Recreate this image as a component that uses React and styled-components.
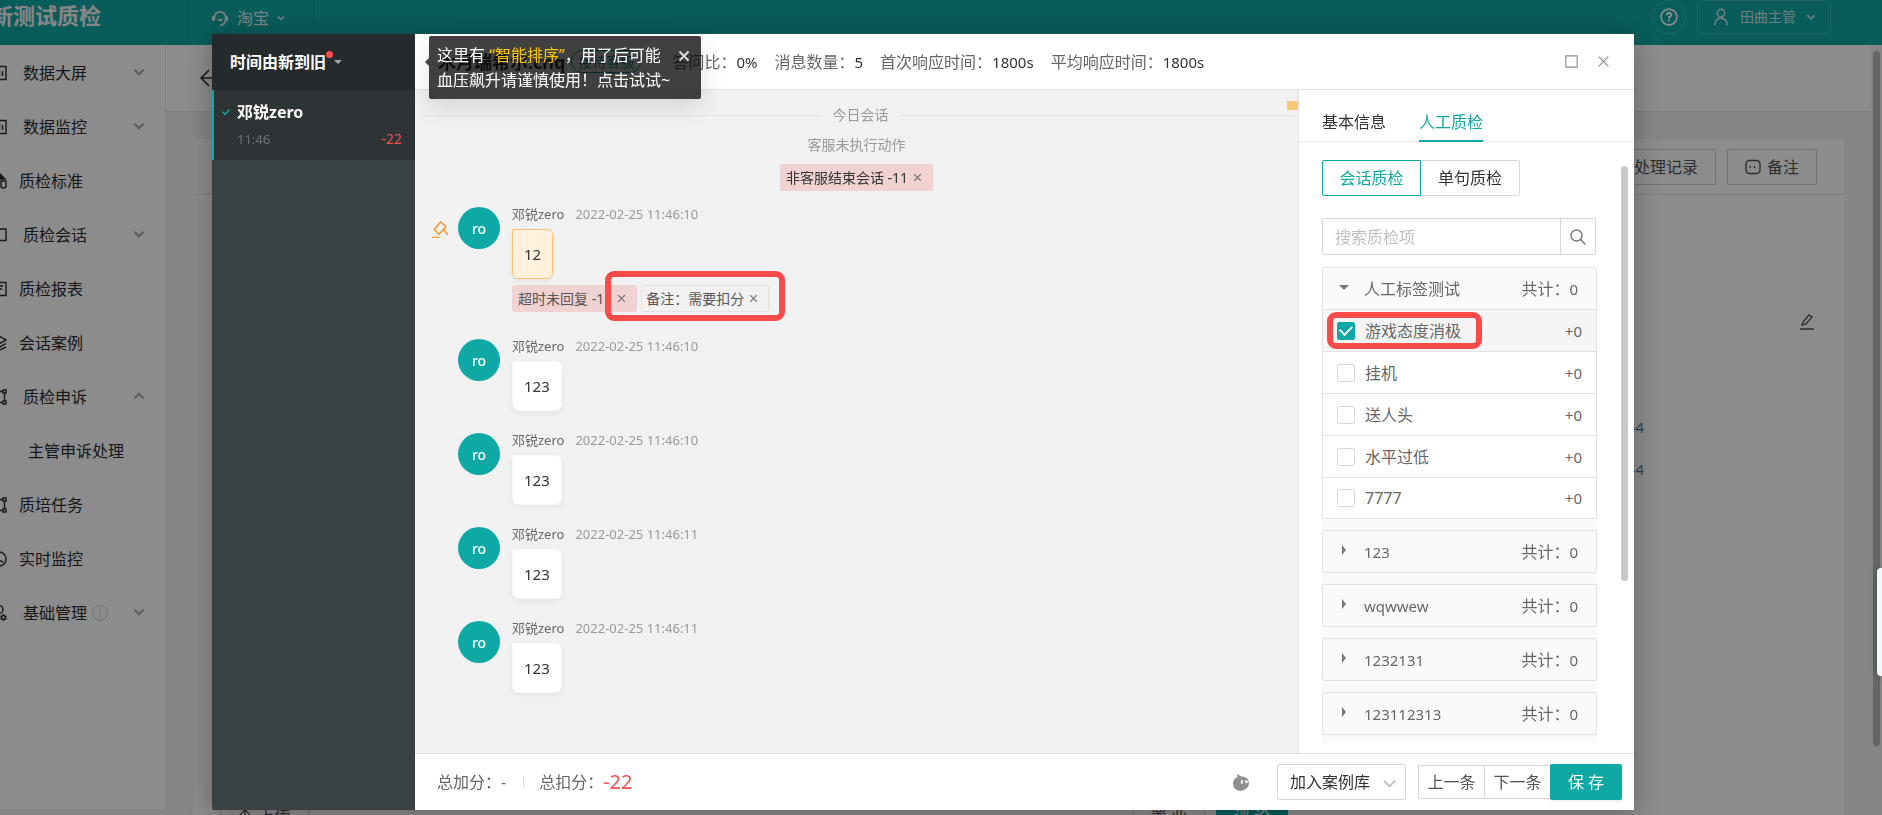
import React, { useState } from 'react'
import styled, { createGlobalStyle } from 'styled-components'

const TEAL = '#0fa9a5'

const GlobalStyle = createGlobalStyle`
    * {
        box-sizing: border-box;
    }
    body {
        margin: 0;
        overflow: hidden;
        font-family: "Noto Sans", "Noto Sans CJK SC", sans-serif;
        font-size: 16px;
        line-height: 24px;
        color: #333;
    }
    button, input, select {
        font: inherit;
        color: inherit;
        margin: 0;
        padding: 0;
    }
    button {
        border: none;
        background: none;
        cursor: pointer;
        white-space: nowrap;
    }
    ul {
        list-style: none;
        margin: 0;
        padding: 0;
    }
    h1, h2, h3, p {
        margin: 0;
    }
    svg {
        display: block;
        flex: none;
    }
`

/* ---------- icons ---------- */

const Icon = ({ size = 16, width = 1.4, children }) => (
  <svg width={size} height={size} viewBox='0 0 16 16' fill='none' stroke='currentColor' strokeWidth={width} aria-hidden='true'>
    {children}
  </svg>
)

const ChevronDown = ({ size = 12, width = 3 }) => (
  <Icon size={size} width={width}><path d='M2 5l6 6 6-6' /></Icon>
)
const ChevronUp = ({ size = 12, width = 3 }) => (
  <Icon size={size} width={width}><path d='M2 11l6-6 6 6' /></Icon>
)
const Cross = ({ size = 12, width = 1.8 }) => (
  <Icon size={size} width={width}><path d='M2 2l12 12M14 2L2 14' /></Icon>
)

const menuIcons = {
  chart: <path d='M1 1.5h14v13H1zM5 11V6M8.500 11V4.500M11.500 11V6' />,
  standard: <><path d='M2 1h7l5 5H2z' fill='currentColor' /><path d='M10 8h5v5q0 2-2.500 2T10 13z' /></>,
  dialog: <path d='M1 2h14v11.500H1z' />,
  report: <path d='M1 1.500h14v13H1zM5 5h7M5 8h6' />,
  layers: <path d='M8 1l7 4-7 4-7-4zM1 8.500l7 4 7-4M1 12l7 3.500 7-3.500' />,
  flow: <path d='M12 1h3v3h-3zM12 12h3v3h-3zM13.500 4v8M12 2.500H6M12 13.500H6M1 1h3v3H1z' />,
  clock: <><circle cx='8' cy='8' r='7' /><path d='M7 4v5l5 2' /></>,
  manage: <><circle cx='8' cy='4.500' r='4' /><path d='M1 15q0-5 6-5.500' /><circle cx='12.500' cy='12.500' r='2' /><path d='M12.500 9v1.500M12.500 14.500V16M9.500 11l1.300.8M14.200 13.300l1.300.8M15.500 11l-1.300.7M9.500 14.200l1.300-.9' /></>,
}

/* ---------- page behind the dialog ---------- */

const Shell = styled.div`
    height: 100vh;
    margin-left: -32px;
    overflow: hidden;
    display: flex;
    flex-direction: column;
    background-color: #f1f5f4;
`

const TopBar = styled.header`
    height: 45px;
    flex: none;
    display: flex;
    align-items: flex-start;
    padding-right: 51px;
    background-color: ${TEAL};
    color: #fff;
`

const Logo = styled.h1`
    width: 219px;
    padding-left: 23px;
    font-size: 22px;
    line-height: 30px;
    font-weight: 700;
    color: #f4f4f4;
    white-space: nowrap;
`

const Channel = styled.button`
    height: 45px;
    width: 127px;
    padding: 0 0 10px 23px;
    display: flex;
    align-items: center;
    gap: 8px;
    border-left: 1px solid #0d9996;
    border-right: 1px solid #0d9996;
    color: #e2eeee;
`

const TopRight = styled.div`
    margin-left: auto;
    display: flex;
    gap: 11px;
`

const HelpButton = styled.button`
    width: 34px;
    height: 34px;
    display: grid;
    place-items: center;
    border: 1px solid #37b5b2;
    border-radius: 50%;
`

const UserButton = styled.button`
    width: 134px;
    height: 34px;
    padding-left: 14px;
    display: flex;
    align-items: center;
    gap: 10px;
    border: 1px solid #37b5b2;
    border-radius: 6px;
    font-size: 14px;
    color: #c9e6e5;
`

const Body = styled.div`
    flex: 1;
    min-height: 0;
    display: flex;
`

const SideNav = styled.nav`
    width: 197px;
    flex: none;
    padding-top: 1px;
    margin-bottom: 4px;
    background-color: #fff;
    border-bottom: 1px solid #e8e8e8;
`

const NavItem = styled.a`
    height: 54px;
    padding: 0 20px 0 ${props => (props.$child ? 60 : 23)}px;
    display: flex;
    align-items: center;
    color: #2b2b2b;
    text-decoration: none;
    white-space: nowrap;
`

const NavText = styled.span`
    margin-left: ${props => (props.$wide ? 16 : 12)}px;
`

const NavArrow = styled.span`
    margin-left: auto;
    padding-bottom: 3px;
    color: #aaa;
`

const InfoMark = styled.span`
    margin-left: 5px;
    color: #cfcfcf;
`

const Main = styled.main`
    flex: 1;
    min-width: 0;
    display: flex;
    flex-direction: column;
`

const PageHead = styled.div`
    height: 67px;
    flex: none;
    padding-left: 34px;
    display: flex;
    align-items: center;
    background-color: #fff;
    border-left: 1px solid #ececec;
    border-bottom: 1px solid #e4e4e4;
`

const Card = styled.section`
    flex: 1;
    min-height: 0;
    margin: 27px 27px 0 28px;
    overflow: hidden;
    background-color: #fff;
`

const CardHead = styled.div`
    height: 56px;
    padding: 0 27px;
    display: flex;
    align-items: center;
    justify-content: flex-end;
    gap: 11px;
    border-bottom: 1px solid #e8e8e8;
`

const GhostButton = styled.button`
    height: 36px;
    min-width: ${props => props.$width}px;
    padding: 0 17px;
    display: flex;
    align-items: center;
    justify-content: center;
    gap: 6px;
    border: 1px solid #d0d0d0;
    border-radius: 2px;
    color: #555;
`

const CardBody = styled.div`
    padding: 106px 29px 0 27px;
`

const EditLine = styled.div`
    height: 42px;
    display: flex;
    align-items: center;
    justify-content: flex-end;
    color: #555;
`

const OrderLinks = styled.div`
    padding: 63px 171px 308px 0;
    text-align: right;
    font-size: 15px;
    line-height: 42px;

    a {
        display: block;
        color: #4f79a8;
        text-decoration: none;
    }
`

const Actions = styled.div`
    display: flex;
    gap: 11px;
    padding-right: 527px;

    button:first-child {
        margin-right: auto;
    }
`

const TealButton = styled.button`
    height: 36px;
    width: 72px;
    background-color: ${TEAL};
    color: #fff;
`

const PageScroll = styled.div`
    width: 11px;
    flex: none;
    padding: 6px 2px 0;
    background-color: #f3f3f3;
`

const PageThumb = styled.div`
    height: 91%;
    border-radius: 4px;
    background-color: #b8b8b8;
`

/* ---------- dialog ---------- */

const Overlay = styled.div`
    position: fixed;
    inset: 0;
    padding: 34px 248px 5px 212px;
    background-color: rgba(0, 0, 0, 0.45);
`

const Dialog = styled.div`
    height: 100%;
    display: flex;
    box-shadow: 0 4px 30px rgba(0, 0, 0, 0.3);
    border-radius: 2px;
`

const Sessions = styled.aside`
    width: 203px;
    flex: none;
    background-color: #3a4142;
    border-radius: 2px 0 0 2px;
`

const SortButton = styled.button`
    width: 100%;
    height: 56px;
    padding: 0 0 0 18px;
    display: flex;
    align-items: center;
    background-color: #252a2c;
    color: #fff;
    font-weight: 700;
`

const RedDot = styled.i`
    width: 7px;
    height: 7px;
    margin: 0 1px 16px 0;
    border-radius: 50%;
    background-color: #f5524f;
`

const Caret = styled.i`
    border: 4px solid transparent;
    border-top-color: #a5a8a9;
    border-bottom: none;
`

const Session = styled.div`
    height: 70px;
    padding: 10px 13px 0 8px;
    display: grid;
    grid-template-columns: 15px 1fr auto;
    align-content: start;
    align-items: center;
    border-left: 2px solid ${TEAL};
    background-color: #2e3436;
    color: ${TEAL};
`

const SessionName = styled.h3`
    grid-column: 2 / 4;
    font-size: 16px;
    line-height: 24px;
    color: #fff;
`

const SessionTime = styled.time`
    grid-column: 2;
    font-size: 13px;
    line-height: 30px;
    color: #6c7072;
`

const SessionScore = styled.span`
    font-size: 14px;
    line-height: 30px;
    color: #f05350;
`

const Content = styled.div`
    flex: 1;
    min-width: 0;
    display: flex;
    flex-direction: column;
    background-color: #fff;
`

const Head = styled.header`
    height: 56px;
    flex: none;
    padding: 0 24px 0 23px;
    display: flex;
    align-items: center;
    border-bottom: 1px solid #e2e2e2;
    white-space: nowrap;
`

const Title = styled.h2`
    font-size: 18px;
    line-height: 26px;
`

const Pill = styled.span`
    margin: 0 31px 0 6px;
    padding: 0 6px;
    border: 1px solid ${TEAL};
    border-radius: 12px;
    font-size: 14px;
    line-height: 21px;
    color: ${TEAL};
`

const Stat = styled.span`
    margin-right: 17px;
    color: #666;
`

const Value = styled.span`
    font-size: 15px;
    color: #333;
`

const WindowButtons = styled.div`
    margin-left: auto;
    display: flex;
    gap: 19px;
    color: #8c8c8c;
`

const Middle = styled.div`
    flex: 1;
    min-height: 0;
    display: flex;
`

const Chat = styled.div`
    position: relative;
    flex: 1;
    min-width: 0;
    overflow: hidden;
    background-color: #f1f1f1;
`

const ScrollMark = styled.i`
    position: absolute;
    top: 11px;
    right: 0;
    width: 11px;
    height: 9px;
    background-color: #fac67a;
`

const Today = styled.div`
    margin: 15px 3px 0 11px;
    display: flex;
    align-items: center;
    gap: 12px;
    font-size: 14px;
    line-height: 20px;
    color: #999;

    &::before, &::after {
        content: "";
        flex: 1;
        height: 1px;
        background-color: #e3e3e3;
    }
`

const Notice = styled.div`
    margin-bottom: 15px;
    display: flex;
    flex-direction: column;
    align-items: center;
    gap: 9px;
    font-size: 14px;
    line-height: 20px;
    color: #999;

    p {
        margin-top: 10px;
    }
`

const Tag = styled.span`
    height: 27px;
    padding: 0 10px 0 ${props => (props.$note ? 4 : 5)}px;
    display: inline-flex;
    align-items: center;
    gap: 5px;
    border: 1px solid ${props => (props.$note ? '#e3e3e3' : '#f0d2d3')};
    border-radius: 2px;
    background-color: ${props => (props.$note ? '#f1f1f1' : '#f0d2d3')};
    font-size: 14px;
    color: ${props => (props.$dark ? '#333' : '#555')};
    white-space: nowrap;

    button {
        color: #666;
    }
`

const Message = styled.article`
    padding: 1px 17px 0 16px;
    margin-bottom: 21px;
    display: grid;
    grid-template-columns: 27px 54px 1fr;
    align-items: start;
`

const Gavel = styled.span`
    padding-top: 14px;
    color: #fa9021;
`

const Avatar = styled.div`
    width: 42px;
    height: 42px;
    border-radius: 50%;
    background-color: ${TEAL};
    color: #fff;
    font-size: 14px;
    font-weight: 500;
    line-height: 44px;
    text-align: center;
`

const MessageHead = styled.div`
    display: flex;
    gap: 11px;
    height: 22px;
    font-size: 13px;
    line-height: 14px;
    color: #666;

    time {
        color: #999;
    }
`

const Bubble = styled.p`
    width: fit-content;
    padding: 12px 11px;
    border: 1px solid ${props => (props.$marked ? '#fdc271' : '#f6f6f6')};
    border-radius: 0 6px 6px 6px;
    background-color: ${props => (props.$marked ? '#fff1de' : '#fff')};
    box-shadow: 0 2px 5px rgba(0, 0, 0, 0.06);
    font-size: 15px;
    line-height: 24px;
`

const TagRow = styled.div`
    position: relative;
    width: fit-content;
    margin: 6px 0 5px;
    display: flex;
    gap: 4px;
`

const RedFrame = styled.i`
    position: absolute;
    top: ${props => props.$top}px;
    left: ${props => props.$left}px;
    width: ${props => props.$width}px;
    height: ${props => props.$height}px;
    border: 6px solid #f94b47;
    border-radius: 9px;
    pointer-events: none;
`

/* ---------- check panel ---------- */

const Panel = styled.aside`
    width: 336px;
    flex: none;
    display: flex;
    flex-direction: column;
    border-left: 1px solid #e2e2e2;
`

const Tabs = styled.div`
    height: 52px;
    flex: none;
    padding-left: 23px;
    display: flex;
    gap: 33px;
    border-bottom: 1px solid #ebebeb;
`

const Tab = styled.button`
    height: 52px;
    padding-top: 14px;
    border-bottom: 2px solid ${props => (props.$active ? TEAL : 'transparent')};
    color: ${props => (props.$active ? TEAL : '#333')};
`

const PanelBody = styled.div`
    flex: 1;
    min-height: 0;
    display: flex;
`

const PanelColumn = styled.div`
    flex: 1;
    min-width: 0;
    padding: 18px 0 10px 23px;
    display: flex;
    flex-direction: column;
`

const PanelThumb = styled.div`
    width: 7px;
    height: 68%;
    margin: 24px 6px 0 24px;
    border-radius: 4px;
    background-color: #c8c8c8;
`

const Segments = styled.div`
    flex: none;
    display: flex;
`

const Segment = styled.button`
    width: 99px;
    height: 36px;
    border: 1px solid ${props => (props.$active ? TEAL : '#d9d9d9')};
    border-radius: ${props => (props.$active ? '2px 0 0 2px' : '0 2px 2px 0')};
    color: ${props => (props.$active ? TEAL : '#333')};

    & + & {
        border-left: none;
    }
`

const Search = styled.div`
    height: 37px;
    flex: none;
    margin: 22px 1px 12px 0;
    display: flex;
    border: 1px solid #d9d9d9;
    border-radius: 2px;

    input {
        flex: 1;
        min-width: 0;
        padding-left: 12px;
        border: none;
        outline: none;
        background: none;
    }
    input::placeholder {
        color: #bfbfbf;
    }
    button {
        width: 35px;
        display: grid;
        place-items: center;
        border-left: 1px solid #d9d9d9;
        color: #777;
    }
`

const Groups = styled.div`
    flex: 1;
    min-height: 0;
    overflow: hidden;
    display: flex;
    flex-direction: column;
    gap: 11px;
    background-color: #fafafa;
`

const Group = styled.section`
    flex: none;
    border: 1px solid #e2e2e2;
    border-radius: 2px;
    color: #666;
`

const GroupHead = styled.button`
    width: 100%;
    height: 41px;
    padding: 0 18px 0 16px;
    display: grid;
    grid-template-columns: 25px 1fr auto;
    align-items: center;
    text-align: left;
    color: #666;
`

const GroupArrow = styled.i`
    width: 0;
    margin-bottom: 3px;
    border: 5px solid transparent;
    ${props => (props.$open
      ? 'border-top-color: #777; border-bottom: none;'
      : 'margin-left: 3px; border-left: 4px solid #777; border-right: none;')}
`

const Small = styled.span`
    font-size: 15px;
`

const Row = styled.li`
    position: relative;
    height: 42px;
    border-top: 1px solid #e2e2e2;
    background-color: ${props => (props.$checked ? '#f5f5f5' : '#fff')};

    &:last-child {
        height: 41px;
    }
`

const RowLabel = styled.label`
    height: 100%;
    padding: 0 14px;
    display: flex;
    align-items: center;
    gap: 10px;
    cursor: pointer;
`

const CheckBox = styled.input`
    appearance: none;
    width: 18px;
    height: 18px;
    flex: none;
    display: grid;
    place-items: center;
    border: 1px solid #d9d9d9;
    border-radius: 2px;
    background-color: #fff;

    &:checked {
        border-color: ${TEAL};
        background-color: ${TEAL};
    }
    &:checked::after {
        content: "";
        width: 6px;
        height: 10px;
        margin-bottom: 3px;
        border: solid #fff;
        border-width: 0 2px 2px 0;
        transform: rotate(45deg);
    }
`

const Score = styled.span`
    margin-left: auto;
    font-size: 15px;
`

/* ---------- dialog footer ---------- */

const Foot = styled.footer`
    height: 57px;
    flex: none;
    padding: 0 12px 0 22px;
    display: flex;
    align-items: center;
    border-top: 1px solid #e2e2e2;
    color: #666;
    white-space: nowrap;
`

const Divider = styled.i`
    width: 1px;
    height: 12px;
    margin: 0 15px 0 17px;
    background-color: #e2e2e2;
`

const Minus = styled.span`
    font-size: 20px;
    color: #f5524f;
`

const Mascot = styled.span`
    margin: 0 28px 0 auto;
`

const CaseSelect = styled.label`
    width: 129px;
    height: 36px;
    margin-right: 12px;
    padding: 0 8px 0 12px;
    display: flex;
    align-items: center;
    justify-content: space-between;
    border: 1px solid #d9d9d9;
    border-radius: 2px;
    color: #bbb;

    select {
        appearance: none;
        border: none;
        outline: none;
        background: none;
        color: #333;
    }
    svg {
        margin-top: 3px;
    }
`

const StepButton = styled.button`
    width: 67px;
    height: 34px;
    border: 1px solid #d9d9d9;
    color: #555;

    & + & {
        width: 65px;
        border-width: 1px 0;
    }
`

const SaveButton = styled.button`
    width: 72px;
    height: 36px;
    border-radius: 2px;
    background-color: ${TEAL};
    box-shadow: 0 2px 2px rgba(0, 0, 0, 0.06);
    color: #fff;
`

/* ---------- floating parts ---------- */

const Tip = styled.div`
    position: fixed;
    top: 36px;
    left: 429px;
    width: 272px;
    padding: 7px 11px 6px 8px;
    display: flex;
    align-items: flex-start;
    justify-content: space-between;
    border-radius: 2px;
    background-color: rgba(0, 0, 0, 0.75);
    box-shadow: 0 8px 24px rgba(0, 0, 0, 0.12);
    color: #fff;
    line-height: 25px;
    white-space: nowrap;

    &::before {
        content: "";
        position: absolute;
        top: 22px;
        left: -4px;
        border: 4px solid transparent;
        border-left: none;
        border-right-color: rgba(0, 0, 0, 0.75);
    }
    em {
        font-style: normal;
        color: #ffc800;
    }
    button {
        padding-top: 7px;
        color: #ddd;
    }
`

const EdgeDock = styled.div`
    position: fixed;
    top: 568px;
    right: 0;
    width: 5px;
    height: 108px;
    border-radius: 4px 0 0 4px;
    background-color: #f2f6fd;
    box-shadow: 0 0 8px rgba(0, 0, 0, 0.3);
`

const menu = [
  { text: '数据大屏', icon: 'chart', arrow: 'down' },
  { text: '数据监控', icon: 'chart', arrow: 'down' },
  { text: '质检标准', icon: 'standard' },
  { text: '质检会话', icon: 'dialog', arrow: 'down' },
  { text: '质检报表', icon: 'report' },
  { text: '会话案例', icon: 'layers' },
  { text: '质检申诉', icon: 'flow', arrow: 'up' },
  { text: '主管申诉处理', child: true },
  { text: '质培任务', icon: 'flow' },
  { text: '实时监控', icon: 'clock' },
  { text: '基础管理', icon: 'manage', arrow: 'down', info: true },
]

const messages = [
  { time: '2022-02-25 11:46:10', text: '12', marked: true },
  { time: '2022-02-25 11:46:10', text: '123' },
  { time: '2022-02-25 11:46:10', text: '123' },
  { time: '2022-02-25 11:46:11', text: '123' },
  { time: '2022-02-25 11:46:11', text: '123' },
]

const stats = [
  ['答问比：', '0%'],
  ['消息数量：', '5'],
  ['首次响应时间：', '1800s'],
  ['平均响应时间：', '1800s'],
]

const rules = ['游戏态度消极', '挂机', '送人头', '水平过低', '7777']
const closedGroups = ['123', 'wqwwew', '1232131', '123112313']

const Page = () => (
  <Shell>
    <TopBar>
      <Logo>新测试质检</Logo>
      <Channel>
        <Icon size={18} width={1.6}>
          <path d='M3 9.500V7.500a5 5 0 0 1 10 0v2a5 5 0 0 1-5 5' />
          <path d='M2 6.500v4M14 6.500v4' strokeWidth='2.500' />
          <path d='M6 9q2 2 4 0' />
        </Icon>
        淘宝
        <ChevronDown size={8} />
      </Channel>
      <TopRight>
        <HelpButton aria-label='帮助'>
          <Icon size={18}>
            <circle cx='8' cy='8' r='7' />
            <path d='M6 6.500q0-2 2-2t2 1.800q0 1-2 2V9.500M8 10.500V12' strokeWidth='1.700' />
          </Icon>
        </HelpButton>
        <UserButton>
          <Icon size={18}><circle cx='8' cy='4.500' r='3.300' /><path d='M2.500 15.500q0-6.500 5.500-6.500t5.500 6.500' /></Icon>
          田曲主管
          <ChevronDown size={10} width={2.4} />
        </UserButton>
      </TopRight>
    </TopBar>
    <Body>
      <SideNav>
        {menu.map(item => (
          <NavItem key={item.text} href='#' $child={item.child}>
            {item.icon && <Icon>{menuIcons[item.icon]}</Icon>}
            {item.child ? item.text : <NavText $wide={item.arrow}>{item.text}</NavText>}
            {item.info && (
              <InfoMark>
                <Icon width={1}><circle cx='8' cy='8' r='7.300' /><path d='M8 4v1.500M8 7v5' /></Icon>
              </InfoMark>
            )}
            {item.arrow && <NavArrow>{item.arrow === 'up' ? <ChevronUp /> : <ChevronDown />}</NavArrow>}
          </NavItem>
        ))}
      </SideNav>
      <Main>
        <PageHead>
          <Icon size={18}><path d='M8 1L1 8l7 7M1 8h15' /></Icon>
        </PageHead>
        <Card>
          <CardHead>
            <GhostButton>处理记录</GhostButton>
            <GhostButton $width={90}>
              <Icon><rect x='1' y='1.500' width='14' height='13' rx='3.500' /><path d='M5 7v2M9.500 7v2' /></Icon>
              备注
            </GhostButton>
          </CardHead>
          <CardBody>
            <EditLine><Icon><path d='M3 11l1-3 6-7 3 2-6 7zM1 15h14' /></Icon></EditLine>
            <OrderLinks>
              <a href='#'>54</a>
              <a href='#'>54</a>
            </OrderLinks>
            <Actions>
              <GhostButton $width={89}>
                <Icon size={14}><path d='M8 14V1M2 7l6-6 6 6' /></Icon>
                上传
              </GhostButton>
              <GhostButton $width={72}>置 业</GhostButton>
              <TealButton>评 论</TealButton>
            </Actions>
          </CardBody>
        </Card>
      </Main>
      <PageScroll><PageThumb /></PageScroll>
    </Body>
  </Shell>
)

const TagItem = ({ children, ...rest }) => (
  <Tag {...rest}>
    {children}
    <button aria-label='删除'><Cross size={9} /></button>
  </Tag>
)

const ChatPane = () => (
  <Chat>
    <ScrollMark />
    <Today>今日会话</Today>
    <Notice>
      <p>客服未执行动作</p>
      <TagItem $dark>非客服结束会话 -11</TagItem>
    </Notice>
    {messages.map((m, i) => (
      <Message key={i}>
        <Gavel>
          {m.marked && (
            <Icon size={17} width={1.3}><path d='M9 1l5 4.500-6.500 7L3 8zM12 8.500l4 4.500M1 15.500h7' /></Icon>
          )}
        </Gavel>
        <Avatar>ro</Avatar>
        <div>
          <MessageHead>
            <span>邓锐zero</span>
            <time>{m.time}</time>
          </MessageHead>
          <Bubble $marked={m.marked}>{m.text}</Bubble>
          {m.marked && (
            <TagRow>
              <TagItem>超时未回复 -11</TagItem>
              <TagItem $note>备注：需要扣分</TagItem>
              <RedFrame $top={-14} $left={93} $width={180} $height={50} />
            </TagRow>
          )}
        </div>
      </Message>
    ))}
  </Chat>
)

const CheckPanel = () => {
  const [checked, setChecked] = useState(['游戏态度消极'])
  const toggle = rule =>
    setChecked(checked.includes(rule) ? checked.filter(r => r !== rule) : [...checked, rule])

  return (
    <Panel>
      <Tabs>
        <Tab>基本信息</Tab>
        <Tab $active>人工质检</Tab>
      </Tabs>
      <PanelBody>
        <PanelColumn>
          <Segments>
            <Segment $active>会话质检</Segment>
            <Segment>单句质检</Segment>
          </Segments>
          <Search>
            <input placeholder='搜索质检项' aria-label='搜索质检项' />
            <button aria-label='搜索'>
              <Icon><circle cx='6.500' cy='6.500' r='5.500' /><path d='M10.500 10.500l5 5' /></Icon>
            </button>
          </Search>
          <Groups>
            <Group>
              <GroupHead>
                <GroupArrow $open />
                <span>人工标签测试</span>
                <span>共计：<Small>0</Small></span>
              </GroupHead>
              <ul>
                {rules.map((rule, i) => (
                  <Row key={rule} $checked={checked.includes(rule)}>
                    <RowLabel>
                      <CheckBox type='checkbox' checked={checked.includes(rule)} onChange={() => toggle(rule)} />
                      {rule}
                      <Score>+0</Score>
                    </RowLabel>
                    {i === 0 && <RedFrame $top={2} $left={4} $width={155} $height={37} />}
                  </Row>
                ))}
              </ul>
            </Group>
            {closedGroups.map(name => (
              <Group key={name}>
                <GroupHead>
                  <GroupArrow />
                  <Small>{name}</Small>
                  <span>共计：<Small>0</Small></span>
                </GroupHead>
              </Group>
            ))}
          </Groups>
        </PanelColumn>
        <PanelThumb />
      </PanelBody>
    </Panel>
  )
}

export default function App() {
  return (
    <>
      <GlobalStyle />
      <Page />
      <Overlay>
        <Dialog role='dialog'>
          <Sessions>
            <SortButton>时间由新到旧<RedDot /><Caret /></SortButton>
            <Session>
              <Icon size={8} width={2.4}><path d='M1 7l5 6 9-10' /></Icon>
              <SessionName>邓锐zero</SessionName>
              <SessionTime>11:46</SessionTime>
              <SessionScore>-22</SessionScore>
            </Session>
          </Sessions>
          <Content>
            <Head>
              <Title>木月瑞希尔.cnq</Title>
              <Pill>接待客服</Pill>
              {stats.map(([label, value]) => (
                <Stat key={label}>{label}<Value>{value}</Value></Stat>
              ))}
              <WindowButtons>
                <button aria-label='最大化'><Icon size={13}><path d='M1 1h14v14H1z' /></Icon></button>
                <button aria-label='关闭'><Cross size={13} width={1.4} /></button>
              </WindowButtons>
            </Head>
            <Middle>
              <ChatPane />
              <CheckPanel />
            </Middle>
            <Foot>
              <span>总加分：-</span>
              <Divider />
              <span>总扣分：</span>
              <Minus>-22</Minus>
              <Mascot>
                <svg width='16' height='17' viewBox='0 0 16 17' aria-hidden='true'>
                  <path d='M4 0l4 2.200Q16 3 16 9t-8 8q-8-.5-8-7.500Q0 5 4.500 3z' fill='#8d9191' />
                  <path d='M9 6v4M8 8h1M13 6v3M14 8h1' stroke='#fff' strokeWidth='1.500' />
                </svg>
              </Mascot>
              <CaseSelect>
                <select aria-label='加入案例库'><option>加入案例库</option></select>
                <ChevronDown size={15} width={1.8} />
              </CaseSelect>
              <StepButton>上一条</StepButton>
              <StepButton>下一条</StepButton>
              <SaveButton>保 存</SaveButton>
            </Foot>
          </Content>
        </Dialog>
      </Overlay>
      <Tip role='tooltip'>
        <div>
          这里有 <em>“智能排序”</em>，用了后可能<br />
          血压飙升请谨慎使用！点击试试~
        </div>
        <button aria-label='关闭提示'><Cross size={12} width={2.6} /></button>
      </Tip>
      <EdgeDock />
    </>
  )
}
